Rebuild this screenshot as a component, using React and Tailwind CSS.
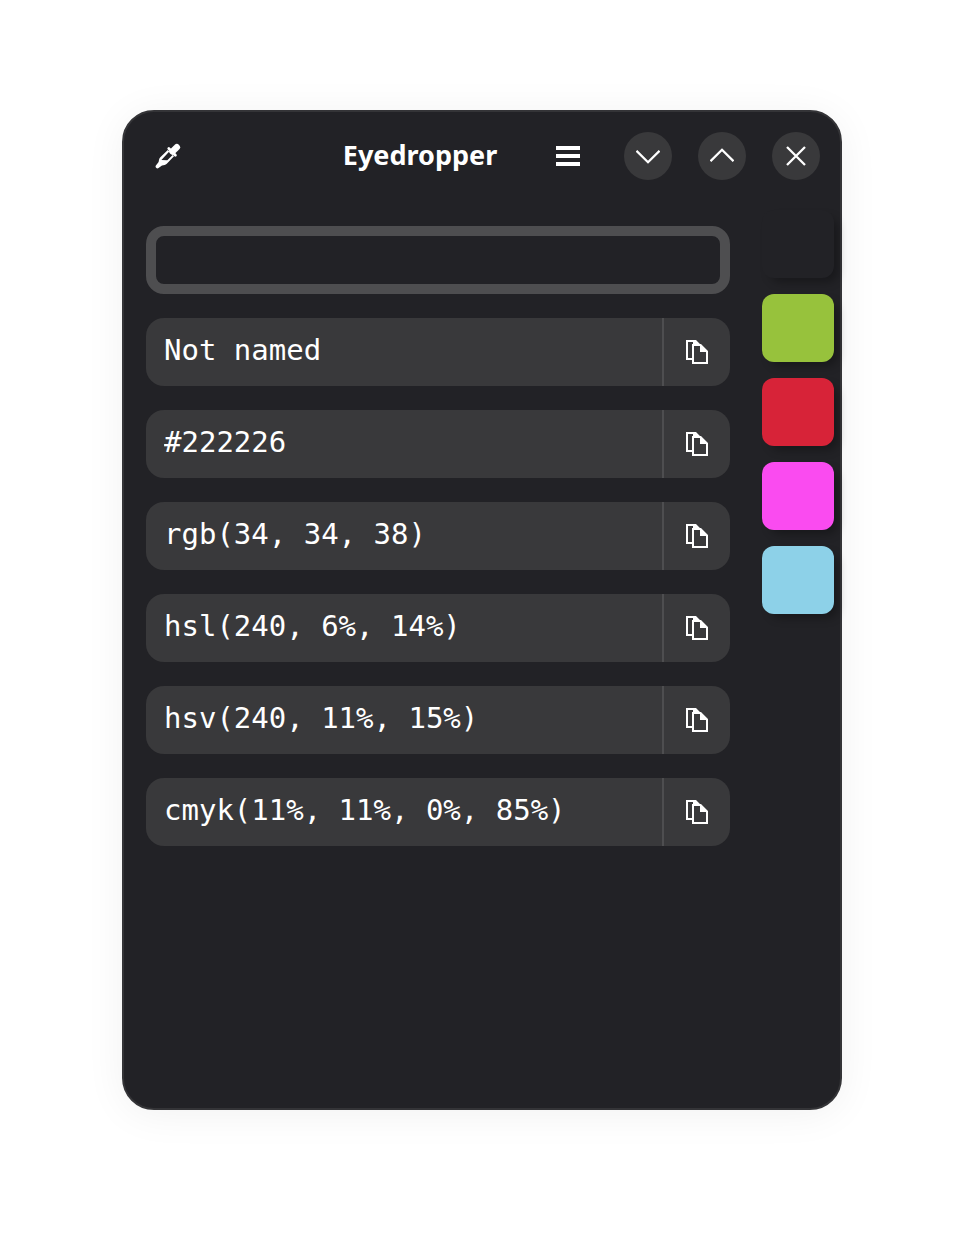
import { useState } from "react";

const FORMATS = [
    { id: "name", label: "Name", value: "Not named" },
    { id: "hex", label: "Hex", value: "#222226" },
    { id: "rgb", label: "RGB", value: "rgb(34, 34, 38)" },
    { id: "hsl", label: "HSL", value: "hsl(240, 6%, 14%)" },
    { id: "hsv", label: "HSV", value: "hsv(240, 11%, 15%)" },
    { id: "cmyk", label: "CMYK", value: "cmyk(11%, 11%, 0%, 85%)" },
];

const HISTORY = [
    { hex: "#222226", className: "bg-[#222226]" },
    { hex: "#97c23c", className: "bg-[#97c23c]" },
    { hex: "#d72338", className: "bg-[#d72338]" },
    { hex: "#fa4bf0", className: "bg-[#fa4bf0]" },
    { hex: "#8dd1e8", className: "bg-[#8dd1e8]" },
];

function DropperIcon() {
    return (
        <svg width="26" height="26" viewBox="0 0 26 26" fill="none" stroke="currentColor" strokeLinecap="round">
            <path d="M21.8 4.2 17.5 8.5" strokeWidth="6.4" />
            <path d="m13.8 5.6 6.6 6.6" strokeWidth="2.8" />
            <path
                fill="currentColor"
                fillRule="evenodd"
                stroke="none"
                d="M12.8 7 5.3 14.2C4 15.6 4 17 3.6 19L.9 22.4C-.3 24.2 1.8 26.2 3.5 25.1L7 22.5c2-.4 3.4-.4 4.8-1.8L19 13.2zM14.3 8.6 17.6 11.9 12.3 17.2 6.4 17z"
            />
        </svg>
    );
}

function MenuIcon() {
    return (
        <svg width="24" height="20" viewBox="0 0 24 20" fill="currentColor">
            <path d="M0 0h24v4H0zM0 8h24v4H0zM0 16h24v4H0z" />
        </svg>
    );
}

function CopyIcon() {
    return (
        <svg width="22" height="24" viewBox="0 0 22 24" fill="none">
            <path d="M0 0h10l5 5H8l-1-1V2H2v16h5v2H0z" fill="currentColor" />
            <path
                fill="currentColor"
                fillRule="evenodd"
                d="M6 4h9l7 7v13H6zM8 6v16h12V12h-6V6z"
            />
        </svg>
    );
}

function WindowButton({ label, d }) {
    return (
        <button
            type="button"
            aria-label={label}
            className="flex size-12 items-center justify-center rounded-full bg-[#39393b] hover:bg-[#464648]"
        >
            <svg width="24" height="24" viewBox="0 0 24 24" fill="none" stroke="currentColor" strokeWidth="2.3">
                <path d={d} />
            </svg>
        </button>
    );
}

function FormatRow({ id, label, value }) {
    return (
        <div className="flex h-17 overflow-hidden rounded-[18px] bg-[#39393b]">
            <input
                id={id}
                aria-label={label}
                defaultValue={value}
                spellCheck={false}
                className="min-w-0 flex-1 bg-transparent pb-0.5 pl-[18px] font-['DejaVu_Sans_Mono',monospace] text-[29px] outline-none"
            />
            <button
                type="button"
                aria-label={`Copy ${label}`}
                onClick={() => navigator.clipboard?.writeText(value)}
                className="flex w-17 items-center justify-center border-l-2 border-[#4e4e50] hover:bg-[#464648]"
            >
                <CopyIcon />
            </button>
        </div>
    );
}

export default function App() {
    const [color, setColor] = useState(HISTORY[0]);

    return (
        <div className="flex min-h-screen bg-white px-[122px] pt-[110px] pb-[134px] font-['Noto_Sans',sans-serif] text-white">
            <div className="flex min-w-0 flex-1 flex-col rounded-[32px] border-2 border-[#343437] bg-[#222226] shadow-[0_4px_40px_rgba(0,0,0,0.06)]">
                <header className="flex items-center px-5 pt-5 pb-[30px]">
                    <button type="button" aria-label="Pick a color" className="flex size-12 items-center justify-center">
                        <DropperIcon />
                    </button>
                    <h1 className="flex-1 pb-0.5 pl-26 text-center text-[27px] leading-8 font-bold">Eyedropper</h1>
                    <button type="button" aria-label="Main menu" className="mr-8 flex size-12 items-center justify-center">
                        <MenuIcon />
                    </button>
                    <div className="flex gap-[26px]">
                        <WindowButton label="Minimize" d="M.5 6.8 12 18.2 23.5 6.8" />
                        <WindowButton label="Maximize" d="M.5 17.2 12 5.8 23.5 17.2" />
                        <WindowButton label="Close" d="m3 3 18 18M21 3 3 21" />
                    </div>
                </header>

                <div className="flex gap-8 pr-1.5 pl-[22px]">
                    <main className="flex min-w-0 flex-1 flex-col gap-6 pt-4">
                        <button
                            type="button"
                            aria-label={`Current color ${color.hex}`}
                            className={`h-17 rounded-[18px] border-10 border-[#4e4e50] ${color.className}`}
                        />
                        {FORMATS.map((f) => (
                            <FormatRow key={f.id} {...f} />
                        ))}
                    </main>

                    <aside className="flex flex-col gap-4">
                        {HISTORY.map((c) => (
                            <button
                                key={c.hex}
                                type="button"
                                aria-label={c.hex}
                                onClick={() => setColor(c)}
                                className={`h-17 w-18 rounded-xl shadow-[6px_6px_10px_-2px_rgba(0,0,0,0.3)] ${c.className}`}
                            />
                        ))}
                    </aside>
                </div>
            </div>
        </div>
    );
}
